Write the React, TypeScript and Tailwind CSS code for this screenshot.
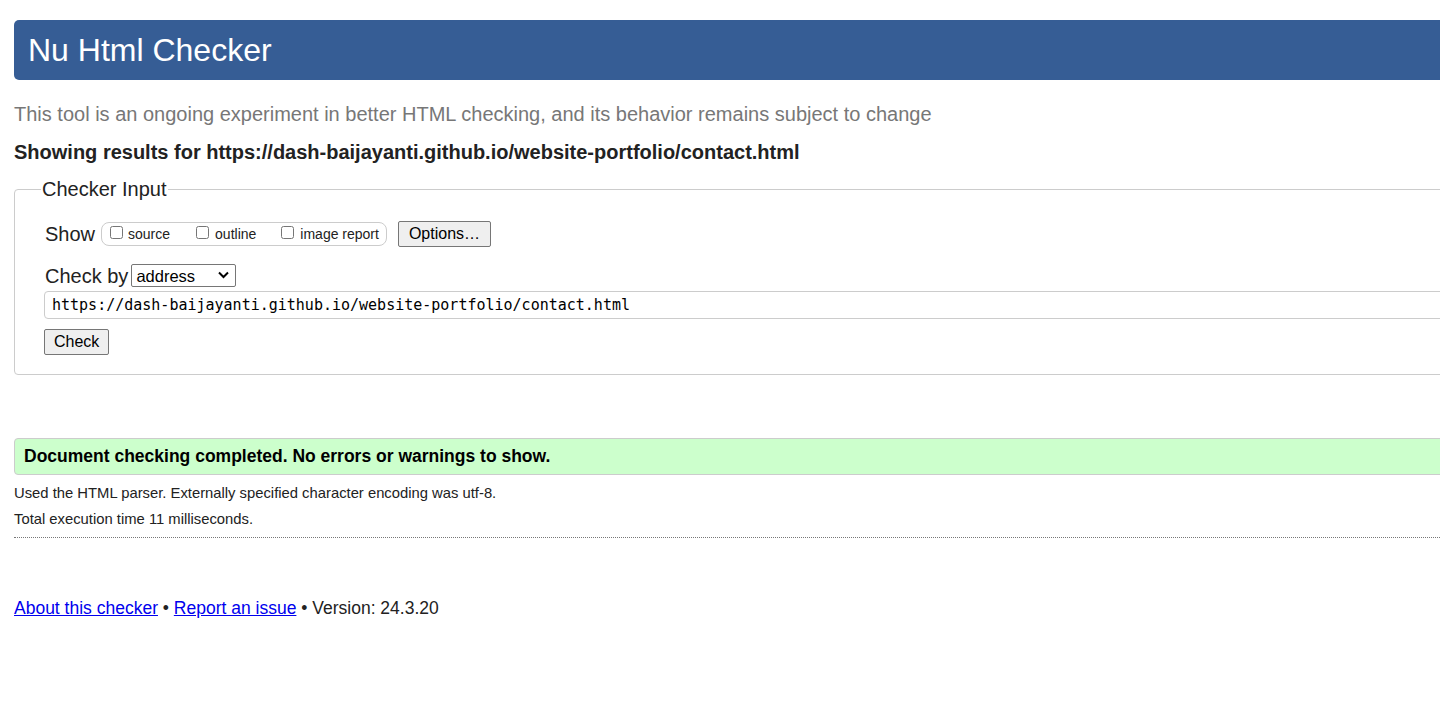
import React from "react";

export default function App() {
  return (
    <div
      className="w-full min-h-[703px] overflow-hidden bg-white text-[#222]"
      style={{ fontFamily: '"Liberation Sans", Arial, sans-serif' }}
    >
      <div className="w-[1500px] pl-[14px] pt-[20px]">
        <header className="h-[60px] bg-[#365d95] rounded-l-[5px] flex items-center pl-[14px]">
          <h1 className="text-[32px] leading-none text-white font-normal">Nu Html Checker</h1>
        </header>

        <p className="mt-[23px] text-[20px] leading-[23px] text-[#777]">
          This tool is an ongoing experiment in better HTML checking, and its behavior remains subject to change
        </p>

        <p className="mt-[15px] text-[20px] leading-[23px] font-bold text-[#222]">
          Showing results for https://dash-baijayanti.github.io/website-portfolio/contact.html
        </p>

        <fieldset className="mt-[14px] border border-[#ccc] rounded-[4px] pl-[30px] pb-[19px] min-w-0">
          <legend className="-ml-[4px] px-[1px] text-[20px] leading-[23px] text-[#222]">Checker Input</legend>

          <div className="mt-[20px] flex items-center h-[26px]">
            <span className="text-[20px] leading-[23px]">Show</span>
            <span className="ml-[6px] inline-flex items-center h-[24px] border border-[#ccc] rounded-[8px] pl-[8px] pr-[7px] text-[14px]">
              <label className="inline-flex items-center">
                <input type="checkbox" className="w-[13px] h-[13px] m-0 -mt-[3px]" />
                <span className="ml-[5px]">source</span>
              </label>
              <label className="inline-flex items-center ml-[26px]">
                <input type="checkbox" className="w-[13px] h-[13px] m-0 -mt-[3px]" />
                <span className="ml-[6px]">outline</span>
              </label>
              <label className="inline-flex items-center ml-[25px]">
                <input type="checkbox" className="w-[13px] h-[13px] m-0 -mt-[3px]" />
                <span className="ml-[6px]">image report</span>
              </label>
            </span>
            <button className="ml-[11px] h-[26px] px-[10px] bg-[#efefef] border border-[#767676] rounded-[2px] text-[16px] leading-none text-black">
              Options…
            </button>
          </div>

          <div className="mt-[18px] flex items-center h-[23px]">
            <span className="text-[20px] leading-[23px]">Check by</span>
            <span className="relative ml-[3px] inline-block">
              <select className="appearance-none w-[105px] h-[23px] border border-[#767676] rounded-[2px] pl-[4px] text-[16.5px] leading-none text-black bg-white">
                <option>address</option>
              </select>
              <svg
                className="absolute right-[7px] top-[7px] pointer-events-none"
                width="11"
                height="8"
                viewBox="0 0 11 8"
              >
                <path d="M1 1.5 L5.5 6 L10 1.5" fill="none" stroke="#000" strokeWidth="2" />
              </svg>
            </span>
          </div>

          <div className="mt-[3px] -ml-[1px] h-[28px] border border-[#ccc] rounded-l-[4px] flex items-center pl-[7px]">
            <span
              className="text-[15px] leading-none text-black"
              style={{ fontFamily: '"DejaVu Sans Mono", "Liberation Mono", monospace' }}
            >
              https://dash-baijayanti.github.io/website-portfolio/contact.html
            </span>
          </div>

          <button className="mt-[10px] -ml-[1px] h-[26px] px-[9px] bg-[#efefef] border border-[#767676] rounded-[2px] text-[16px] leading-none text-black">
            Check
          </button>
        </fieldset>

        <div className="mt-[63px] h-[37px] bg-[#ccffcc] border border-[#ccc] rounded-l-[4px] flex items-center pl-[9px]">
          <p className="text-[17.5px] font-bold text-black">
            Document checking completed. No errors or warnings to show.
          </p>
        </div>

        <p className="mt-[10px] text-[14.8px] leading-[17px] text-[#222]">
          Used the HTML parser. Externally specified character encoding was utf-8.
        </p>
        <p className="mt-[9px] text-[14.8px] leading-[17px] text-[#222]">
          Total execution time 11 milliseconds.
        </p>

        <hr className="mt-[9px] border-0 border-t border-dotted border-[#777]" />

        <p className="mt-[60px] text-[17.5px] leading-[20px] text-[#222]">
          <a href="#" className="text-[#00e] underline">About this checker</a>
          {" • "}
          <a href="#" className="text-[#00e] underline">Report an issue</a>
          {" • Version: 24.3.20"}
        </p>
      </div>
    </div>
  );
}
